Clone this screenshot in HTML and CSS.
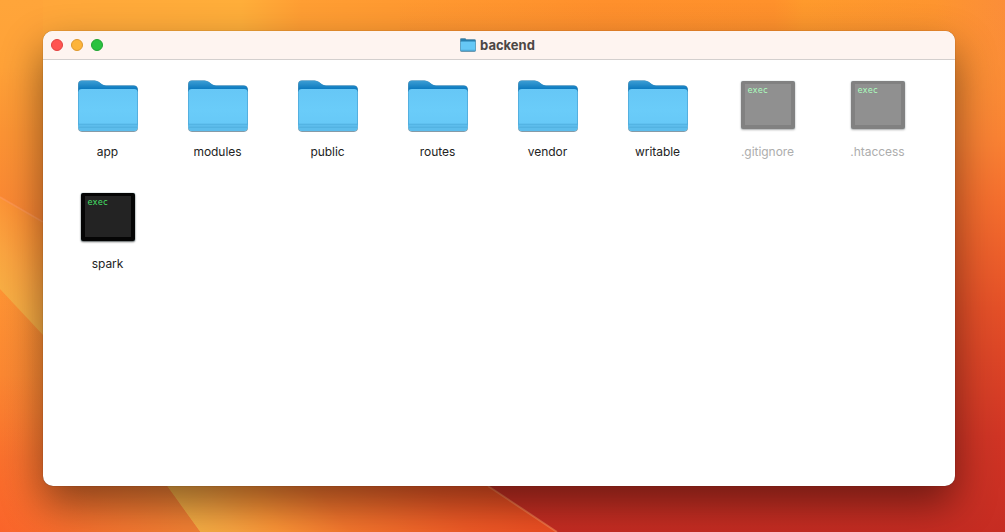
FILE: index.html
```html
<!DOCTYPE html>
<html lang="en">
<head>
<meta charset="utf-8">
<title>backend</title>
<link rel="stylesheet" href="styles.css">
</head>
<body>
<svg class="wallpaper" viewBox="0 0 1005 532" preserveAspectRatio="none" aria-hidden="true">
  <defs>
    <linearGradient id="sky">
      <stop offset="0" stop-color="#ffa53a"/><stop offset=".24" stop-color="#ffae3a"/><stop offset=".3" stop-color="#ff9e33"/><stop offset=".6" stop-color="#ff902c"/><stop offset=".77" stop-color="#ff912b"/><stop offset=".8" stop-color="#ff9a2c"/><stop offset=".93" stop-color="#fe952f"/><stop offset="1" stop-color="#fb8e39"/>
    </linearGradient>
    <linearGradient id="dusk" gradientUnits="userSpaceOnUse" x1="0" y1="0" x2="0" y2="532">
      <stop offset="0" stop-color="#fa8c34" stop-opacity="0"/><stop offset=".12" stop-color="#fa8c34" stop-opacity=".4"/><stop offset=".26" stop-color="#f98234"/><stop offset=".38" stop-color="#f46e2e"/><stop offset=".58" stop-color="#e45028"/><stop offset=".82" stop-color="#d03525"/><stop offset="1" stop-color="#c62c22"/>
    </linearGradient>
    <linearGradient id="left" gradientUnits="userSpaceOnUse" x1="0" y1="0" x2="0" y2="220">
      <stop offset="0" stop-color="#ffa53a"/><stop offset=".3" stop-color="#ffa238"/><stop offset=".6" stop-color="#fc9434"/><stop offset="1" stop-color="#fa8633"/>
    </linearGradient>
    <linearGradient id="band" gradientUnits="userSpaceOnUse" x1="0" y1="289" x2="212" y2="113">
      <stop offset="0" stop-color="#f8ae44"/><stop offset=".1" stop-color="#fba440"/><stop offset=".22" stop-color="#fd9436"/><stop offset=".42" stop-color="#f6762d"/><stop offset=".75" stop-color="#f15a26"/><stop offset="1" stop-color="#ee4d22"/>
    </linearGradient>
    <linearGradient id="ground" gradientUnits="userSpaceOnUse" x1="0" y1="290" x2="0" y2="532">
      <stop offset="0" stop-color="#ff9434"/><stop offset=".35" stop-color="#fc8832"/><stop offset=".7" stop-color="#fa702d"/><stop offset="1" stop-color="#fa642a"/>
    </linearGradient>
    <linearGradient id="warm">
      <stop offset="0" stop-color="#f28a36" stop-opacity="0"/><stop offset="1" stop-color="#f28a36" stop-opacity=".8"/>
    </linearGradient>
  </defs>
  <rect width="1005" height="532" fill="url(#sky)"/>
  <path d="M400 0H1005V532H400Z" fill="url(#dusk)"/>
  <path d="M0 0H43V222L0 197Z" fill="url(#left)"/>
  <path d="M0 197L43 222Q300 360 488 486L557 532H0Z" fill="url(#band)"/>
  <path d="M0 197L43 222M488 486L557 532" fill="none" stroke="#ff9a62" stroke-opacity=".5" stroke-width="2"/>
  <path d="M0 289L43 335L167 486L200 532H0Z" fill="url(#ground)"/>
  <path d="M0 289L43 335L167 486L200 532H0Z" fill="url(#warm)"/>
</svg>

<svg class="symbols" aria-hidden="true">
  <defs>
    <linearGradient id="back" x1="0" y1="0" x2="0" y2="1"><stop offset="0" stop-color="#3e9fd5"/><stop offset=".18" stop-color="#0f7cc0"/><stop offset="1" stop-color="#1680c3"/></linearGradient>
    <linearGradient id="front" x1="0" y1="0" x2="0" y2="1"><stop offset="0" stop-color="#66c7f6"/><stop offset=".5" stop-color="#6accf9"/><stop offset="1" stop-color="#65c7f6"/></linearGradient>
  </defs>
  <symbol id="folder" viewBox="0 0 62 54">
    <path d="M1 47.500V4Q1 .2 5 .2H17.500Q20 .2 22 1.800L25 4.100Q26.500 5.200 29 5.200H56.500Q61 5.200 61 9.700V47.500Q61 51.600 57 51.600H5Q1 51.600 1 47.500Z" fill="#5d7a8a" opacity=".75" transform="translate(0 .3)"/>
    <path d="M1.300 46V4.200Q1.300 .4 5 .4H17.500Q20 .4 22 2L25 4.300Q26.500 5.400 29 5.400H56.500Q60.700 5.400 60.700 9.700V46Z" fill="url(#back)"/>
    <path d="M1.400 47V12.300Q1.400 8.900 4.800 8.900H57.200Q60.600 8.900 60.600 12.300V47Q60.600 50.900 57 50.900H5Q1.400 50.900 1.400 47Z" fill="url(#front)"/>
    <path d="M1.400 44.200H60.600V47Q60.600 50.900 57 50.900H5Q1.400 50.900 1.400 47Z" fill="#5dbdec"/>
    <path d="M1.400 44.200H60.600M1.800 47.200H60.200" stroke="#4aa9d9" stroke-width=".7"/>
  </symbol>
</svg>

<main class="window">
  <header class="titlebar">
    <div class="controls"><i class="dot close"></i><i class="dot minimize"></i><i class="dot expand"></i></div>
    <h1 class="title"><svg class="title-icon" viewBox="0 0 16 14"><path d="M.3 12.200V1.500Q.3.400 1.400.400H5L6.500 1.600H14.600Q15.700 1.600 15.700 2.700V12.200Q15.700 13.500 14.400 13.500H1.600Q.3 13.500.3 12.200Z" fill="#287fae" stroke="#56839a" stroke-width=".6"/><path d="M.7 4.200Q.7 3.400 1.500 3.400H14.500Q15.300 3.400 15.300 4.200V12.200Q15.300 13.100 14.400 13.100H1.600Q.7 13.100.7 12.200Z" fill="#66c8f6"/><path d="M.7 11.700H15.300V12.200Q15.300 13.100 14.400 13.100H1.600Q.7 13.100.7 12.200Z" fill="#4fa9d6"/></svg>backend</h1>
  </header>
  <section class="files">
    <div class="file"><svg class="folder"><use href="#folder"/></svg><span class="name">app</span></div>
    <div class="file"><svg class="folder"><use href="#folder"/></svg><span class="name">modules</span></div>
    <div class="file"><svg class="folder"><use href="#folder"/></svg><span class="name">public</span></div>
    <div class="file"><svg class="folder"><use href="#folder"/></svg><span class="name">routes</span></div>
    <div class="file"><svg class="folder"><use href="#folder"/></svg><span class="name">vendor</span></div>
    <div class="file"><svg class="folder"><use href="#folder"/></svg><span class="name">writable</span></div>
    <div class="file hidden-file"><div class="exec">exec</div><span class="name">.gitignore</span></div>
    <div class="file hidden-file"><div class="exec">exec</div><span class="name">.htaccess</span></div>
    <div class="file"><div class="exec">exec</div><span class="name">spark</span></div>
  </section>
</main>
</body>
</html>
```

FILE: styles.css
```css
* { box-sizing: border-box; }

body {
  margin: 0;
  width: 1005px;
  height: 532px;
  padding: 31px 50px 46px 43px;
  overflow: hidden;
  font-family: Inter, "Liberation Sans", sans-serif;
}

.wallpaper {
  position: absolute;
  inset: 0;
  width: 1005px;
  height: 532px;
}

.symbols { position: absolute; width: 0; height: 0; }

.window {
  position: relative;
  display: flex;
  flex-direction: column;
  height: 455px;
  overflow: hidden;
  background: #fff;
  border-radius: 10px;
  box-shadow: 0 0 1px rgba(0, 0, 0, .55), 0 18px 42px rgba(0, 0, 0, .46);
}

.titlebar {
  display: grid;
  grid-template-columns: 1fr auto 1fr;
  align-items: center;
  height: 29px;
  padding: 0 11px 0 8px;
  background: #fef4f0;
  border-bottom: 1px solid #d3cfce;
}

.controls { display: flex; gap: 8px; }

.dot {
  width: 12px;
  height: 12px;
  border-radius: 50%;
  border: 1px solid;
}
.close { background: #ff5451; border-color: #e0403e; }
.minimize { background: #fdb43a; border-color: #dd972c; }
.expand { background: #2bc240; border-color: #1fa331; }

.title {
  display: flex;
  align-items: center;
  gap: 4px;
  margin: 0;
  color: #4c4745;
  font-size: 13px;
  font-weight: 700;
  line-height: 16px;
  padding-bottom: 1px;
}
.title-icon { width: 16px; height: 14px; margin-top: 1px; }

.files {
  display: grid;
  grid-template-columns: repeat(8, 110px);
  grid-auto-rows: 112px;
  padding: 20px 9px 0;
}

.file {
  display: flex;
  flex-direction: column;
  align-items: center;
}
.folder { width: 62px; height: 54px; margin-left: 2px; }

.name {
  margin: 10px 0 0 1px;
  color: #232323;
  font-size: 12px;
  line-height: 16px;
  letter-spacing: -.04px;
}

.exec {
  width: 54px;
  height: 48px;
  margin: 1px 0 5px 2px;
  padding: 1px 0 0 2.5px;
  border: 4px solid #050505;
  border-top-width: 3px;
  border-radius: 2px;
  background: #232323;
  color: #45e067;
  box-shadow: 0 0 1px #65969f, 0 1px 2px rgba(0, 0, 0, .65);
  font: 8.500px/10px "DejaVu Sans Mono", monospace;
}

.hidden-file .exec { opacity: .5; color: #5cff80; }
.hidden-file .name { color: #adadad; }
```
